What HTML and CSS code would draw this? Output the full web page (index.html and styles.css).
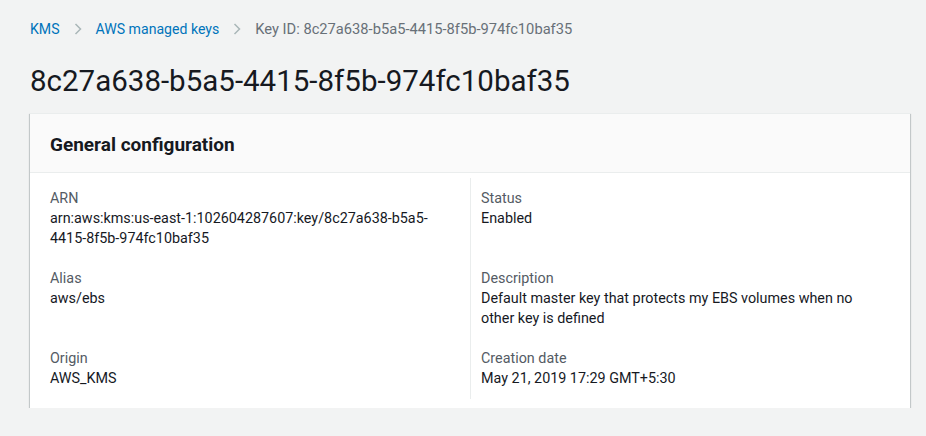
FILE: index.html
```html
<!DOCTYPE html>
<html lang="en">
<head>
<meta charset="utf-8">
<title>8c27a638-b5a5-4415-8f5b-974fc10baf35</title>
<link rel="stylesheet" href="styles.css">
</head>
<body>
<div class="page">
  <nav class="breadcrumbs">
    <a class="crumb link" href="#">KMS</a>
    <svg class="chev" width="8" height="12" viewBox="0 0 8 12"><polyline points="1.5,1 6.5,6 1.5,11" fill="none" stroke="#aab7b8" stroke-width="1.5"/></svg>
    <a class="crumb link" href="#">AWS managed keys</a>
    <svg class="chev" width="8" height="12" viewBox="0 0 8 12"><polyline points="1.5,1 6.5,6 1.5,11" fill="none" stroke="#aab7b8" stroke-width="1.5"/></svg>
    <span class="crumb current">Key ID: 8c27a638-b5a5-4415-8f5b-974fc10baf35</span>
  </nav>
  <h1 class="title">8c27a638-b5a5-4415-8f5b-974fc10baf35</h1>
  <section class="card">
    <header class="card-header">
      <h2>General configuration</h2>
    </header>
    <div class="card-body">
      <div class="cell">
        <div class="label">ARN</div>
        <div class="value">arn:aws:kms:us-east-1:102604287607:key/8c27a638-b5a5-4415-8f5b-974fc10baf35</div>
      </div>
      <div class="cell">
        <div class="label">Status</div>
        <div class="value">Enabled</div>
      </div>
      <div class="cell">
        <div class="label">Alias</div>
        <div class="value">aws/ebs</div>
      </div>
      <div class="cell">
        <div class="label">Description</div>
        <div class="value">Default master key that protects my EBS volumes when no other key is defined</div>
      </div>
      <div class="cell">
        <div class="label">Origin</div>
        <div class="value">AWS_KMS</div>
      </div>
      <div class="cell">
        <div class="label">Creation date</div>
        <div class="value">May 21, 2019 17:29 GMT+5:30</div>
      </div>
    </div>
  </section>
</div>
</body>
</html>
```

FILE: styles.css
```css
* { box-sizing: border-box; }
html, body {
  margin: 0;
  padding: 0;
  background: #f2f3f3;
}
body {
  font-family: Roboto, "Liberation Sans", sans-serif;
  font-size: 14.35px;
  line-height: 20px;
  color: #16191f;
}
.page {
  padding: 19px 16px 0 30px;
}
.breadcrumbs {
  display: flex;
  align-items: center;
  gap: 14px;
  height: 20px;
}
.crumb { text-decoration: none; }
.link { color: #0073bb; font-size: 14.1px; }
.current { color: #687078; font-size: 14.7px; }
.chev { display: block; }
.title {
  margin: 24px 0 0;
  font-size: 29.5px;
  line-height: 36px;
  font-weight: 400;
  color: #16191f;
}
.card {
  margin-top: 14px;
  background: #fff;
  border-top: 1px solid #eaeded;
  box-shadow: 0 1px 1px 0 rgba(0,28,36,.3), 1px 1px 1px 0 rgba(0,28,36,.15), -1px 1px 1px 0 rgba(0,28,36,.15);
}
.card-header {
  background: #fafafa;
  border-bottom: 1px solid #eaeded;
  padding: 21px 20px 17px;
}
.card-header h2 {
  margin: 0;
  font-size: 19px;
  line-height: 20px;
  font-weight: 700;
  color: #16191f;
}
.card-body {
  display: grid;
  grid-template-columns: 1fr 1fr;
  padding: 5px 20px 9px;
}
.cell {
  padding: 0 20px 20px 0;
}
.cell:nth-child(even) {
  border-left: 1px solid #eaeded;
  padding-left: 10px;
}
.cell:nth-child(-n+2) { padding-top: 11px; }
.cell:nth-last-child(-n+2) { padding-bottom: 10px; }
.label { color: #545b64; }
.value { color: #16191f; }
```
